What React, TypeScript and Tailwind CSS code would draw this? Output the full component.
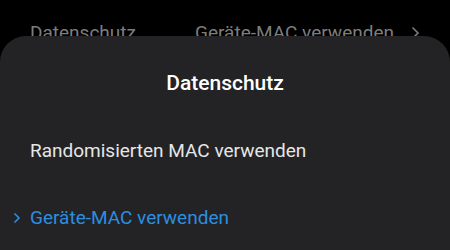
export default function App() {
  return (
    <div
      className="w-[450px] h-[250px] bg-black overflow-hidden flex flex-col"
      style={{ fontFamily: "Roboto, 'Noto Sans', sans-serif" }}
    >
      <div className="h-[36px] shrink-0 relative overflow-hidden">
        <div className="absolute top-[20px] left-[30px] right-[30px] flex items-center text-[19px] text-[#7d7d7d] leading-[26px]">
          <span>Datenschutz</span>
          <span className="ml-auto">Geräte-MAC verwenden</span>
          <svg className="ml-[17px]" width="9" height="14" viewBox="0 0 9 14" fill="none">
            <path d="M1.5 1.5 7 7l-5.5 5.5" stroke="#7d7d7d" strokeWidth="1.6" />
          </svg>
        </div>
      </div>
      <div className="flex-1 bg-[#232325] rounded-t-[26px] flex flex-col">
        <div className="h-[46px] mt-[25px] flex items-center justify-center text-white text-[21px] font-medium">
          Datenschutz
        </div>
        <div className="h-[46px] mt-[21px] flex items-center pl-[30px] text-[19px] text-[#e6e6e6]">
          Randomisierten MAC verwenden
        </div>
        <div className="h-[46px] mt-[21px] flex items-center text-[19px] text-[#2b8ee0]">
          <svg className="ml-[13px] mr-[8px]" width="9" height="12" viewBox="0 0 9 12" fill="none">
            <path d="M1.5 1.5 6 6l-4.5 4.5" stroke="#2b8ee0" strokeWidth="1.6" />
          </svg>
          <span>Geräte-MAC verwenden</span>
        </div>
      </div>
    </div>
  );
}
